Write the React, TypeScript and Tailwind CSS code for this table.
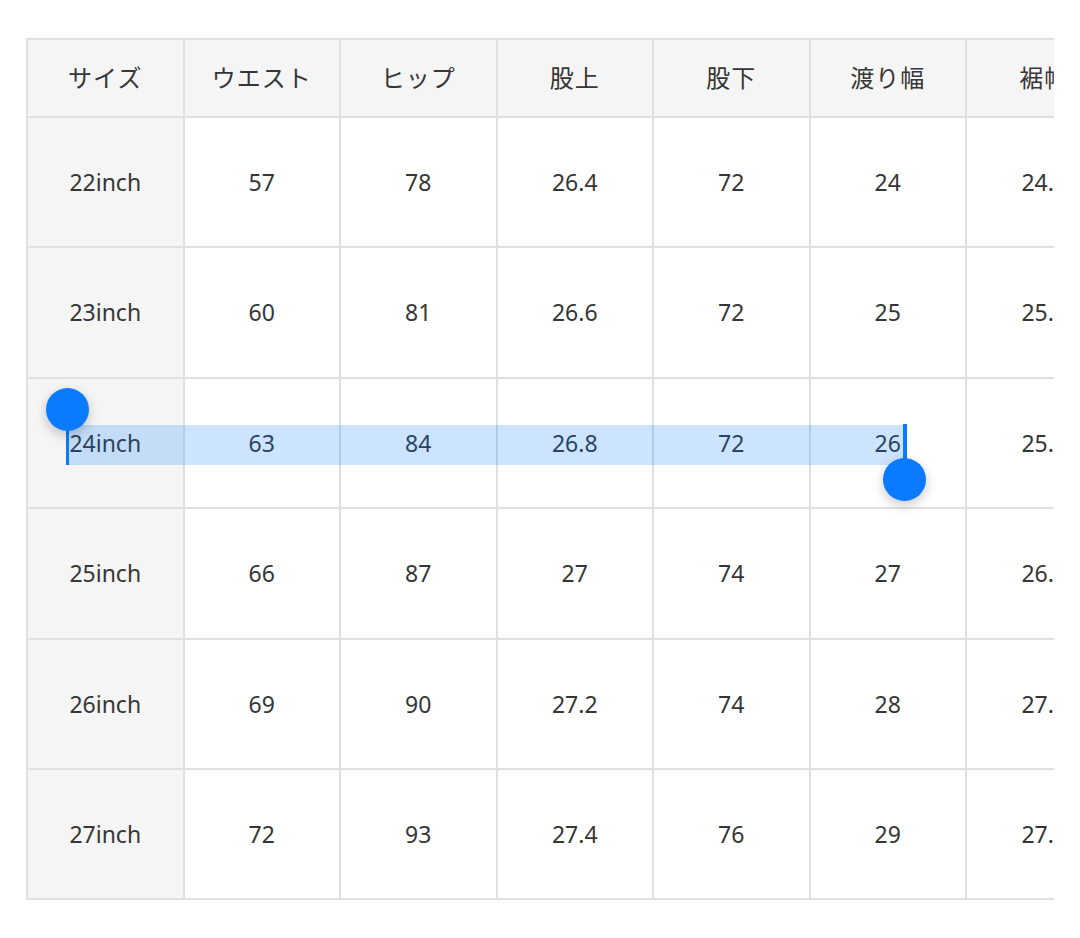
import React from 'react';

const headers = ['サイズ', 'ウエスト', 'ヒップ', '股上', '股下', '渡り幅', '裾幅'];

const rows: string[][] = [
  ['22inch', '57', '78', '26.4', '72', '24', '24.5'],
  ['23inch', '60', '81', '26.6', '72', '25', '25.0'],
  ['24inch', '63', '84', '26.8', '72', '26', '25.5'],
  ['25inch', '66', '87', '27', '74', '27', '26.0'],
  ['26inch', '69', '90', '27.2', '74', '28', '27.0'],
  ['27inch', '72', '93', '27.4', '76', '29', '27.5'],
];

export default function App() {
  return (
    <div
      className="min-h-[938px] w-[1080px] bg-white pl-[26px] pt-[38px] text-[#363636]"
      style={{ fontFamily: '"Noto Sans", "Noto Sans CJK JP", sans-serif' }}
    >
      <div className="relative w-[1028px]">
        {/* size table, clipped on the right like the original scroll area */}
        <div className="w-[1028px] overflow-hidden">
          <table className="w-[1096px] table-fixed border-collapse">
            <thead>
              <tr className="h-[78px] bg-[#f5f5f5]">
                {headers.map((h) => (
                  <th
                    key={h}
                    className="w-[156.5px] border-2 border-[#e0e0e0] text-center text-[24px] font-normal tracking-[1px]"
                  >
                    {h}
                  </th>
                ))}
              </tr>
            </thead>
            <tbody>
              {rows.map((row) => (
                <tr key={row[0]} className="h-[130.4px]">
                  {row.map((cell, i) => (
                    <td
                      key={i}
                      className={`border-2 border-[#e0e0e0] text-center text-[23px] ${
                        i === 0 ? 'bg-[#f5f5f5]' : 'bg-white'
                      }`}
                    >
                      {cell}
                    </td>
                  ))}
                </tr>
              ))}
            </tbody>
          </table>
        </div>

        {/* text selection over the 24inch row */}
        <div className="pointer-events-none absolute left-[40px] top-[387px] h-[40px] w-[839px] bg-[#007aff]/20" />

        {/* start handle */}
        <div className="absolute left-[40px] top-[385px] h-[42px] w-[3px] bg-[#0a7bff]" />
        <div className="absolute left-[20px] top-[350px] h-[43px] w-[43px] rounded-full bg-[#0a7bff] shadow-[0_4px_12px_rgba(0,0,0,0.22)]" />

        {/* end handle */}
        <div className="absolute left-[877px] top-[386px] h-[56px] w-[4px] bg-[#0a7bff]" />
        <div className="absolute left-[857px] top-[420px] h-[43px] w-[43px] rounded-full bg-[#0a7bff] shadow-[0_4px_12px_rgba(0,0,0,0.22)]" />
      </div>
    </div>
  );
}
